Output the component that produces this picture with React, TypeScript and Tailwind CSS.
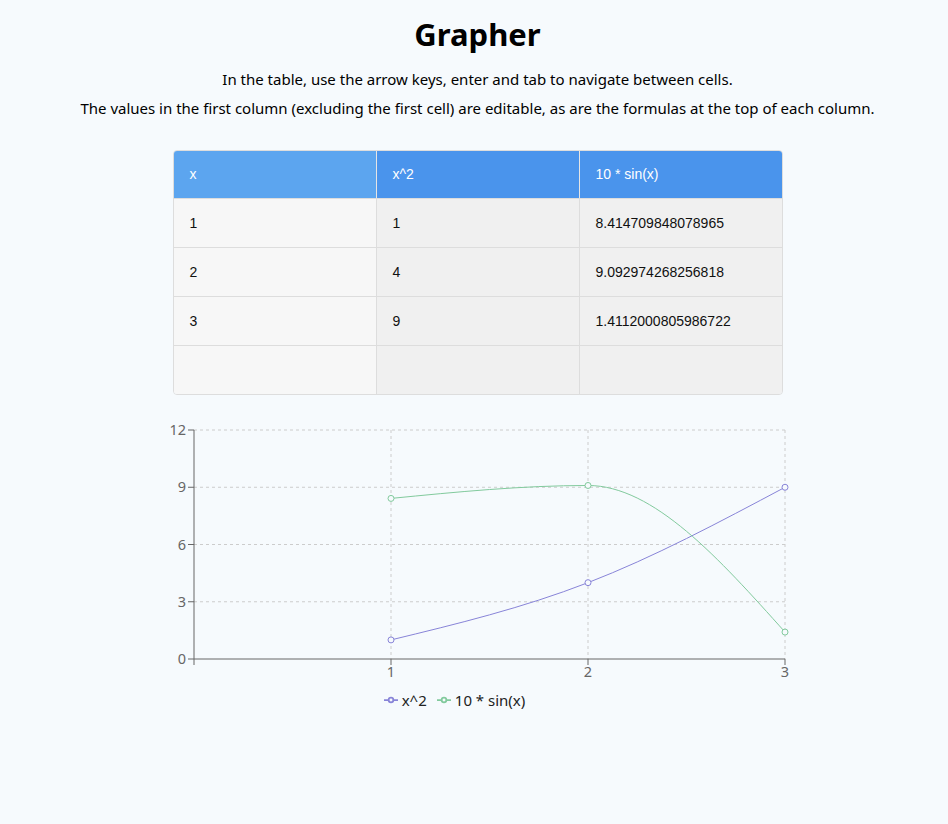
const columns = ['x', 'x^2', '10 * sin(x)'];

const rows = [
  ['1', '1', '8.414709848078965'],
  ['2', '4', '9.092974268256818'],
  ['3', '9', '1.4112000805986722'],
  ['', '', ''],
];

// chart geometry, in svg coordinates (svg left = 157, top = 420)
const X0 = 37;
const PX = 197;
const Y0 = 239;
const PY = 229 / 12;

const sx = (v: number) => X0 + v * PX;
const sy = (v: number) => Y0 - v * PY;

type Pt = [number, number];

const sign = (v: number) => (v < 0 ? -1 : 1);

// d3 curveMonotoneX, same curve recharts draws for type="monotone"
function monotone(pts: Pt[]) {
  const n = pts.length;
  const t: number[] = new Array(n).fill(0);
  for (let i = 1; i < n - 1; i++) {
    const h0 = pts[i][0] - pts[i - 1][0];
    const h1 = pts[i + 1][0] - pts[i][0];
    const s0 = (pts[i][1] - pts[i - 1][1]) / h0;
    const s1 = (pts[i + 1][1] - pts[i][1]) / h1;
    const p = (s0 * h1 + s1 * h0) / (h0 + h1);
    t[i] = (sign(s0) + sign(s1)) * Math.min(Math.abs(s0), Math.abs(s1), 0.5 * Math.abs(p)) || 0;
  }
  const h = pts[1][0] - pts[0][0];
  t[0] = (3 * (pts[1][1] - pts[0][1]) / h - t[1]) / 2;
  const hl = pts[n - 1][0] - pts[n - 2][0];
  t[n - 1] = (3 * (pts[n - 1][1] - pts[n - 2][1]) / hl - t[n - 2]) / 2;
  let d = `M${pts[0][0]},${pts[0][1]}`;
  for (let i = 0; i < n - 1; i++) {
    const [ax, ay] = pts[i];
    const [bx, by] = pts[i + 1];
    const dx = (bx - ax) / 3;
    d += `C${ax + dx},${ay + dx * t[i]},${bx - dx},${by - dx * t[i + 1]},${bx},${by}`;
  }
  return d;
}

const series = [
  { name: 'x^2', color: '#8884d8', values: [1, 4, 9] },
  { name: '10 * sin(x)', color: '#82ca9d', values: [8.414709848078965, 9.092974268256818, 1.4112000805986722] },
];

function LegendIcon({ color }: { color: string }) {
  return (
    <svg width="14" height="14" viewBox="0 0 32 32" className="shrink-0">
      <path
        strokeWidth={4}
        fill="none"
        stroke={color}
        d="M0,16h10.666666666666666A5.333333333333333,5.333333333333333,0,1,1,21.333333333333332,16H32M21.333333333333332,16A5.333333333333333,5.333333333333333,0,1,1,10.666666666666666,16"
      />
    </svg>
  );
}

function Chart() {
  const yTicks = [0, 3, 6, 9, 12];
  const xTicks = [1, 2, 3];
  return (
    <div className="w-[641px] mx-auto">
      <svg width="641" height="270" className="block">
        {/* grid */}
        <g stroke="#ccc" strokeDasharray="3 3" fill="none">
          {yTicks.slice(1).map((v) => (
            <line key={v} x1={X0} x2={sx(3)} y1={sy(v)} y2={sy(v)} />
          ))}
          {xTicks.map((v) => (
            <line key={v} x1={sx(v)} x2={sx(v)} y1={sy(12)} y2={Y0} />
          ))}
        </g>

        {/* axes */}
        <g stroke="#666" fill="none">
          <line x1={X0} x2={X0} y1={sy(12)} y2={Y0} />
          <line x1={X0} x2={sx(3)} y1={Y0} y2={Y0} />
          {yTicks.map((v) => (
            <line key={v} x1={X0 - 6} x2={X0} y1={sy(v)} y2={sy(v)} />
          ))}
          <line x1={X0} x2={X0} y1={Y0} y2={Y0 + 6} />
          {xTicks.map((v) => (
            <line key={v} x1={sx(v)} x2={sx(v)} y1={Y0} y2={Y0 + 6} />
          ))}
        </g>
        <g fill="#666" fontSize="14.5" style={{ fontFamily: '"Noto Sans", sans-serif' }}>
          {yTicks.map((v) => (
            <text key={v} x={X0 - 8} y={sy(v)} dy="0.355em" textAnchor="end">
              {v}
            </text>
          ))}
          {xTicks.map((v) => (
            <text key={v} x={sx(v)} y={Y0 + 8} dy="0.71em" textAnchor="middle">
              {v}
            </text>
          ))}
        </g>

        {/* lines */}
        {series.map((s) => {
          const pts: Pt[] = s.values.map((v, i) => [sx(i + 1), sy(v)]);
          return (
            <g key={s.name}>
              <path d={monotone(pts)} stroke={s.color} fill="none" strokeWidth={1} />
              {pts.map(([x, y], i) => (
                <circle key={i} cx={x} cy={y} r={3} fill="#f6fafd" stroke={s.color} strokeWidth={1} />
              ))}
            </g>
          );
        })}
      </svg>

      <div className="flex justify-center items-center gap-[10px] pr-[46px] -mt-[1px]">
        {series.map((s) => (
          <div key={s.name} className="flex items-center gap-1 text-[15px] text-[#222]">
            <LegendIcon color={s.color} />
            <span>{s.name}</span>
          </div>
        ))}
      </div>
    </div>
  );
}

export default function App() {
  return (
    <div className="min-h-[824px] bg-[#f6fafd] pl-[7px] pt-[14px] font-['Noto_Sans',sans-serif] text-black">
      <h1 className="text-center text-[31px] font-bold leading-[40px]">Grapher</h1>
      <div className="mt-[11px] text-center text-[15px] leading-[29px]">
        <p>In the table, use the arrow keys, enter and tab to navigate between cells.</p>
        <p>The values in the first column (excluding the first cell) are editable, as are the formulas at the top of each column.</p>
      </div>

      <div className="mt-[27px] mx-auto w-[610px] rounded-[4px] border border-[#ddd] overflow-hidden font-['Liberation_Sans',Arial,sans-serif] text-[14px]">
        <div className="grid grid-cols-[203px_203px_1fr] h-[47px] text-white">
          <div className="bg-[#5ca5ef] flex items-center pl-4 border-r border-[#e5e5e5]">{columns[0]}</div>
          <div className="bg-[#4a94ec] flex items-center pl-4 border-r border-[#e5e5e5]">{columns[1]}</div>
          <div className="bg-[#4a94ec] flex items-center pl-4">{columns[2]}</div>
        </div>
        {rows.map((r, i) => (
          <div key={i} className="grid grid-cols-[203px_203px_1fr] h-[49px] border-t border-[#ddd] text-[#111]">
            <div className="bg-[#f7f7f7] flex items-center pl-4 border-r border-[#ddd]">{r[0]}</div>
            <div className="bg-[#f0f0f0] flex items-center pl-4 border-r border-[#ddd]">{r[1]}</div>
            <div className="bg-[#f0f0f0] flex items-center pl-4">{r[2]}</div>
          </div>
        ))}
      </div>

      <div className="mt-[25px]">
        <Chart />
      </div>
    </div>
  );
}
